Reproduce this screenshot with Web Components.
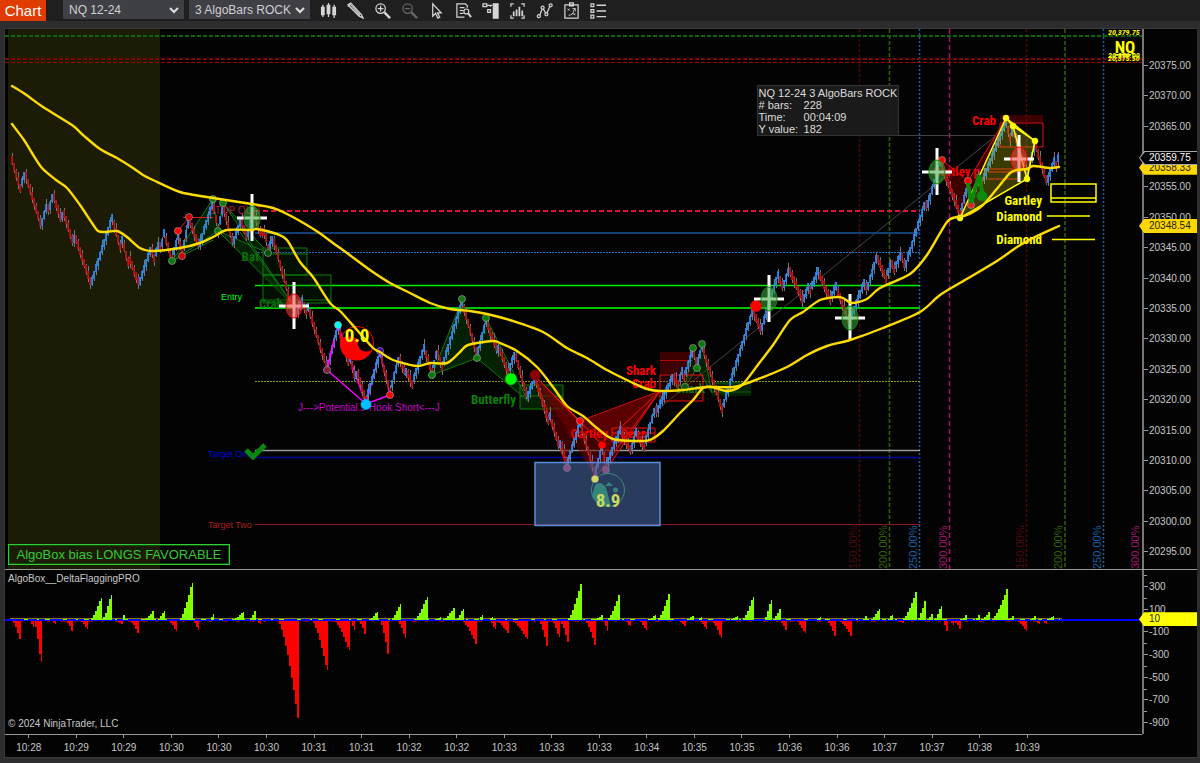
<!DOCTYPE html>
<html lang="en">
<head>
<meta charset="utf-8">
<title>Chart - NQ 12-24</title>
<style>
  html, body { margin: 0; height: 100%; background: #2d2d30; }
  body { font-family: "Liberation Sans", Arial, sans-serif; font-size: 10px; color: #c8c8c8; }
</style>
</head>
<body>
<chart-window>
  <tool-bar slot="bar"></tool-bar>
  <price-panel slot="price"></price-panel>
  <value-axis slot="price-axis" values="20375.00,20370.00,20365.00,20360.00,20355.00,20350.00,20345.00,20340.00,20335.00,20330.00,20325.00,20320.00,20315.00,20310.00,20305.00,20300.00,20295.00" style="--top:21px;--bottom:2px">
    <price-tag style="--y:25.7%;--bg:#ffd700">20358.33</price-tag>
    <price-tag style="--y:23.9%;--bg:#000;--fg:#fff;--edge:#aaa">20359.75</price-tag>
    <price-tag style="--y:36.5%;--bg:#ffd700">20348.54</price-tag>
  </value-axis>
  <delta-panel slot="delta"></delta-panel>
  <value-axis slot="delta-axis" minor values="300,100,-100,-300,-500,-700,-900" style="--top:5px;--bottom:0px">
    <price-tag style="--y:30%;--bg:#ff0">10</price-tag>
  </value-axis>
  <time-axis slot="time" values="10:28,10:29,10:29,10:30,10:30,10:30,10:31,10:31,10:32,10:32,10:33,10:33,10:33,10:34,10:35,10:35,10:36,10:36,10:37,10:37,10:38,10:39"></time-axis>
</chart-window>

<script>
const attach = (el, html) => { el.attachShadow({ mode: "open" }).innerHTML = html; };

/* ---------- window frame ---------- */
customElements.define("chart-window", class extends HTMLElement {
  constructor() {
    super();
    attach(this, `<style>
      :host { display: flex; flex-direction: column; height: 100vh; background: #2d2d30; }
      main { flex: 1; min-height: 0; margin: 7px 3px 5px 4px; border: 1px solid #3a3a3d; border-width: 1px 0 1px 1px; background: #030303;
        display: grid; grid-template-columns: minmax(0, 1fr) 55px; grid-template-rows: minmax(0, 540fr) minmax(0, 165fr) 23px; }
      div { display: grid; min-width: 0; min-height: 0; }
      .lower { border-top: 1px solid #999; }
      .time { border-top: 1px solid #999; }
    </style>
    <slot name="bar"></slot>
    <main>
      <div><slot name="price"></slot></div><div><slot name="price-axis"></slot></div>
      <div class="lower"><slot name="delta"></slot></div><div class="lower"><slot name="delta-axis"></slot></div>
      <div class="time"><slot name="time"></slot></div>
    </main>`);
  }
});

/* ---------- toolbar ---------- */
const ICONS = {
  "Chart style": `<path fill="currentColor" stroke="none" d="M1 5h4v9H1zM7 3h4v10H7zM13 5h4v9h-4z"/><path d="M3 3v13M9 1v15M15 3v14"/>`,
  "Drawing tools": `<path d="M1 3l3-2 11 12 2 4-4-2z"/><path d="M4 3l10 11M3 5l10 10M1 5l3-3" stroke-width="1.200"/>`,
  "Zoom in": `<circle cx="7" cy="7" r="5"/><path d="M7 4v6M4 7h6"/><path d="M11 11l6 6" stroke-width="2.6"/>`,
  "Zoom out": `<g stroke="#666"><circle cx="7" cy="7" r="5"/><path d="M4 7h6"/><path d="M11 11l6 6" stroke-width="2.6"/></g>`,
  "Cursor": `<path d="M5 2v13l3-3 2.4 5 2-1-2.400-4.500H14z"/>`,
  "Data series": `<path d="M13 6V4l-2-2H2v14h8M5 6h5M5 9h4M5 12h4"/><circle cx="12" cy="10" r="2.600"/><path d="M14 12l3 4" stroke-width="2"/>`,
  "Chart trader": `<path fill="currentColor" d="M12 2h5v15h-5z"/><path d="M1 2h4v3H1zM5 3.500h6M6 8h3v3H6zM9 5V3.500"/>`,
  "Chart properties": `<path d="M2 5V2h3M13 2h3v3M16 14v3h-3M5 17H2v-3"/><path d="M5 15v-5M8 15V8M11 15V5M14 15V9" stroke-width="1.800"/>`,
  "Indicators": `<path d="M4 14L7 6l4 7 4-9"/><g fill="#1f1f20"><circle cx="3" cy="15" r="1.600"/><circle cx="7" cy="6" r="1.600"/><circle cx="11" cy="13" r="1.600"/><circle cx="15.500" cy="3.500" r="1.600"/></g>`,
  "Strategies": `<path d="M2 3h14v14H2zM7 1h4v3H7z"/><path d="M6 14c3 0 5-2 5-4s1-2 2-3m0 3V7h-3M5 7l2 2m0-2L5 9M11 12l2 2m0-2l-2 2" stroke-width="1"/>`,
  "Properties": `<path d="M1 2h3v3H1zM1 8h3v3H1zM1 14h3v3H1z"/><path d="M7 3.500h10M7 9.500h10M7 15.500h10" stroke-width="1.500"/>`
};
customElements.define("tool-button", class extends HTMLElement {
  connectedCallback() {
    const name = this.getAttribute("name");
    attach(this, `<style>
      :host { display: block; }
      button { display: grid; place-items: center; width: 27px; height: 20px; margin: 0; padding: 0; border: 0; background: none; color: #d6d6d6; }
      svg { width: 17px; height: 17px; fill: none; stroke: currentColor; stroke-width: 1.3; }
    </style><button type="button" aria-label="${name}"><svg viewBox="0 0 18 18" aria-hidden="true">${ICONS[name]}</svg></button>`);
  }
});
customElements.define("tool-bar", class extends HTMLElement {
  constructor() {
    super();
    attach(this, `<style>
      :host { display: flex; align-items: flex-start; height: 21px; background: #1f1f20; }
      a { width: 46px; height: 21px; line-height: 21px; font-size: 15px; text-align: center; color: #fff; background: #e03c00; text-decoration: none; margin-right: 17px; }
      label { position: relative; display: block; margin-right: 5px; }
      select { appearance: none; width: 121px; height: 19px; padding: 0 16px 0 6px; border: 0; border-radius: 0; background: #3f3f46; color: #d0d0d0; font: 12px "Liberation Sans", Arial, sans-serif; }
      label svg { position: absolute; right: 5px; top: 6px; width: 10px; height: 8px; fill: none; stroke: #ddd; stroke-width: 2; pointer-events: none; }
    </style>
    <a href="#chart">Chart</a>
    <label><select aria-label="Instrument"><option>NQ 12-24</option></select><svg viewBox="0 0 10 8"><path d="M1 2l4 4 4-4"/></svg></label>
    <label><select aria-label="Interval"><option>3 AlgoBars ROCK</option></select><svg viewBox="0 0 10 8"><path d="M1 2l4 4 4-4"/></svg></label>
    ${Object.keys(ICONS).map(n => `<tool-button name="${n}"></tool-button>`).join("")}`);
  }
});

/* ---------- axes ---------- */
customElements.define("value-axis", class extends HTMLElement {
  connectedCallback() {
    const rows = this.getAttribute("values").split(",").map(v => `<li>${v}</li>`).join("");
    attach(this, `<style>
      :host { display: block; position: relative; min-height: 0; border-left: 2px solid #777; }
      ul { box-sizing: border-box; height: 100%; margin: 0; padding: var(--top) 0 var(--bottom); list-style: none; display: flex; flex-direction: column; }
      li { position: relative; flex: 1; min-height: 0; display: flex; align-items: center; gap: 1px; }
      li::before { content: ""; width: 4px; height: 1px; background: #999; }
      :host([minor]) li::after { content: ""; position: absolute; left: 0; top: 0; width: 3px; height: 1px; background: #999; }
    </style><ul>${rows}</ul><slot></slot>`);
  }
});
customElements.define("price-tag", class extends HTMLElement {
  constructor() {
    super();
    attach(this, `<style>
      :host { position: absolute; left: -5px; right: 0; top: var(--y); height: 14px; margin-top: -7px; display: block;
        background: var(--edge, var(--bg)); clip-path: polygon(0 50%, 5px 0, 100% 0, 100% 100%, 5px 100%); }
      span { position: absolute; inset: 1px 0 1px 1px; padding-left: 9px; line-height: 12px; color: var(--fg, #222); background: var(--bg); clip-path: polygon(0 50%, 5px 0, 100% 0, 100% 100%, 5px 100%); }
    </style><span><slot></slot></span>`);
  }
});
customElements.define("time-axis", class extends HTMLElement {
  connectedCallback() {
    attach(this, `<style>
      :host { display: block; }
      ol { display: grid; grid-auto-flow: column; grid-auto-columns: 1fr; margin: 0 91px 0 0; padding: 0; list-style: none; text-align: center; }
      li::before { content: ""; display: block; width: 1px; height: 3px; margin: 0 auto 4px; background: #999; }
      li { line-height: 12px; }
    </style><ol>${this.getAttribute("values").split(",").map(v => `<li>${v}</li>`).join("")}</ol>`);
  }
});

/* ---------- price data: turning points of the swings ---------- */
const SWINGS = [12,160,20,188,25,173,41,225,47,205,49,210,53,194,61,220,63,211,73,242,75,236,91,284,112,218,120,246,122,240,128,262,129,257,139,284,151,248,154,258,159,243,161,248,164,233,172,259,178,236,182,254,189,219,199,246,213,202,218,230,223,206,233,243,241,220,247,238,253,210,260,232,265,232,268,249,273,238,290,300,297,312,302,301,306,311,308,307,327,368,338,327,348,361,350,358,355,378,357,372,366,400,380,353,390,392,399,357,405,373,407,371,412,384,424,348,432,372,437,351,442,367,462,302,477,355,486,321,497,350,499,348,508,372,515,353,527,397,535,378,548,420,550,416,559,446,561,442,567,464,580,423,595,474,602,447,606,466,620,430,631,451,636,432,644,447,655,408,657,411,673,376,678,384,682,371,684,377,693,350,697,365,702,346,722,409,753,310,761,330,778,275,783,287,789,269,803,301,808,287,810,290,818,271,830,299,836,286,849,323,864,283,867,289,877,256,886,279,891,262,894,269,901,254,905,267,925,203,927,207,940,162,960,214,968,184,971,202,979,175,982,182,1006,122,1010,138,1013,129,1027,175,1035,144,1047,182,1054,161,1056,165,1059,155];
const SLOW = "12,86 25,94 43,107 72,125 83,135 100,149 117,158 133,168 143,175 153,180 180,192 207,197 252,204 273,208 285,213 300,221 318,232 333,243 347,253 370,270 390,283 410,293 430,303 450,309 470,311 487,314 513,321 543,332 567,348 587,358 607,370 633,383 647,389 660,391 683,390 707,387 733,387 753,381 787,367 807,355 827,346 850,340 883,328 920,312 940,295 965,280 997,261 1017,247 1033,238 1059,226";
const FAST = "12,124 24,140 32,153 42,168 56,180 67,188 80,205 92,223 98,231 105,232 117,231 127,237 140,248 153,251 180,248 200,243 213,237 227,230 252,230 257,229 277,234 287,240 300,262 313,277 330,303 340,311 357,330 373,348 380,352 393,360 417,366 430,363 447,363 460,352 468,345 492,341 500,343 517,351 537,367 553,387 567,406 583,416 597,428 613,439 643,441 652,439 663,431 680,413 693,400 703,388 712,387 727,391 742,385 760,362 773,345 790,320 803,312 820,300 837,297 843,298 852,303 867,299 880,288 910,274 927,255 947,222 957,217 967,215 983,205 1000,185 1010,173 1017,170 1027,169 1033,166 1050,168 1059,167";

/* Catmull-Rom spline through a list of points */
function smooth(list) {
  const p = list.split(" ").map(s => s.split(",").map(Number));
  let d = `M${p[0]}`;
  for (let i = 0; i < p.length - 1; i++) {
    const a = p[Math.max(0, i - 1)], b = p[i], c = p[i + 1], e = p[Math.min(p.length - 1, i + 2)];
    d += `C${b[0] + (c[0] - a[0]) / 7} ${b[1] + (c[1] - a[1]) / 7} ${c[0] - (e[0] - b[0]) / 7} ${c[1] - (e[1] - b[1]) / 7} ${c}`;
  }
  return d;
}
function bars() {
  let wicks = "", up = "", down = "", n = 0, k = 0;
  for (let x = 12; x <= 1059; x += 2, n++) {
    while (k < SWINGS.length - 4 && SWINGS[k + 2] < x) k += 2;
    const [a, b, c, d] = SWINGS.slice(k, k + 4);
    const y = Math.round(b + (d - b) * (x - a) / (c - a)), tail = [3, 0, 1, 5, 0, 2, 0][n % 7];
    wicks += `M${x + .5} ${y - 4 - tail}v${9 + tail + n * 5 % 4}`;
    const body = `M${x} ${y - 4}v8`;
    if (d < b) up += body; else down += body;
  }
  return `<path stroke="#777" d="${wicks}"/><path stroke="#1e90ff" stroke-width="1.700" d="${up}"/><path stroke="#c00a0a" stroke-width="1.700" d="${down}"/>`;
}
const dot = (x, y, c, r = 3.5, ring = "#aaa") => `<circle cx="${x}" cy="${y}" r="${r}" fill="${c}" stroke="${ring}" stroke-opacity=".6"/>`;
const cross = (x, y, c, edge) => `<path d="M${x - 15} ${y}h30M${x} ${y - 24}v47" stroke="#fff" stroke-width="3"/><ellipse cx="${x}" cy="${y}" rx="8" ry="12" fill="${c}" fill-opacity=".55" stroke="${edge}"/>`;
const hline = (y, c, w = 1, dash = "", x1 = 255, x2 = 920) => `<path d="M${x1} ${y}H${x2}" stroke="${c}" stroke-width="${w}" ${dash && `stroke-dasharray="${dash}"`}/>`;
const vline = (x, c, dash, label, lx = x - 3) => (dash ? `<path d="M${x} 29V569" stroke="${c}" stroke-width="1.500" stroke-dasharray="${dash}"/>` : "") +
  `<text transform="translate(${lx} 569) rotate(-90)" fill="${c}" font-size="11">${label}</text>`;
const name = (x, y, c, t, s = 13) => `<text class="n" x="${x}" y="${y}" fill="${c}" font-size="${s}" text-anchor="end">${t}</text>`;

customElements.define("price-panel", class extends HTMLElement {
  constructor() {
    super();
    attach(this, `<style>
      :host { display: block; position: relative; min-height: 0; overflow: hidden; }
      svg { display: block; width: 100%; height: 100%; fill: none; }
      text { stroke: none; }
      .n { font-family: "Liberation Sans Narrow", "Roboto Condensed", "Open Sans Condensed", "DejaVu Sans Condensed", sans-serif; font-weight: 700; }
      .i { font-style: italic; }
      dl { position: absolute; left: 66.1%; top: 10.4%; box-sizing: border-box; margin: 0; padding: 1px; height: 51px; display: grid; grid-template-columns: 45px auto; font-size: 11px; line-height: 12px; color: #ddd; background: #1c1c1cee; border: 1px solid #333; white-space: nowrap; }
      dt, dd { margin: 0; }
      .t { grid-column: 1 / 3; }
      .bias { position: absolute; left: 3px; bottom: 4px; box-sizing: border-box; width: 222px; height: 21px; line-height: 19px; text-align: center; border: 1px solid #32cd32; outline: 1px solid #0a4a0a; outline-offset: -2px; font-size: 13px; color: #32cd32; white-space: nowrap; }
    </style>
    <svg viewBox="5 29 1137 540" role="img" aria-label="NQ 12-24 price chart">
      <rect x="8" y="29" width="152" height="540" fill="#1c1b05"/>
      ${vline(859.5, "#4a0a0a", "3 2", "150.00%")}${vline(889.5, "#336408", "4 2", "200.00%")}${vline(919.5, "#1560a8", "2 2", "250.00%")}${vline(949.5, "#a0146a", "5 3", "300.00%")}
      ${vline(1026.5, "#4a0a0a", "3 2", "150.00%")}${vline(1065, "#336408", "4 2", "200.00%")}${vline(1103.500, "#1560a8", "2 2", "250.00%")}${vline(1142, "#a0146a", "", "300.00%")}
      ${hline(36, "#0b660b", 2, "4 2", 5, 1142)}${hline(59, "#7d0505", 2, "4 2", 5, 1142)}${hline(62.5, "#a00808", 1, "4 2", 5, 1142)}
      ${hline(211, "#dc143c", 2, "5 3")}${hline(233, "#123f72", 2)}${hline(252.5, "#1e70c8", 1, "2 1")}
      ${hline(285.5, "#00f000", 1.5)}${hline(308, "#00c800", 2)}${hline(381.5, "#8a9a1a", 1, "2 1")}
      ${hline(450.5, "#999", 1.5)}${hline(457.5, "#0000a0", 1.5)}${hline(524.5, "#8b1a1a", 1)}
      <text x="221" y="300" fill="#0f0" font-size="9">Entry</text>
      <text x="208" y="457" fill="#00d" font-size="9">Target One</text>
      <text x="208" y="528" fill="#a22" font-size="9">Target Two</text>
      <text x="298" y="411" fill="#c800c8" font-size="10">J---&gt;Potential J-Hook Short&lt;---J</text>
      <path d="M657 410L996 135.500H895" stroke="#444"/>

      <g fill="#064006" fill-opacity=".5" stroke="#0c7c0c">
        <path d="M172 261L213 199L218 231ZM218 231L223 203L268 253ZM218 231L294 306L223 203M240 232L294 306M172 261L213 240"/>
        <path d="M263 248h44v27h-44zM263 275h68v28h-68zM263 300h68M263 254h44" fill-opacity=".2"/>
        <path d="M432 375L462 300L477 358ZM477 358L486 318L528 401ZM520 385h43v24h-43zM520 396h43"/>
        <path d="M685 387L693 348L697 368L702 343L712 393L697 368ZM712 383h39M712 392h39"/>
        <path d="M712 383h39v13h-39z" stroke="none"/>
      </g>
      <g fill="#700" fill-opacity=".5" stroke="#f01010">
        <path d="M178 231L182 256L189 217Z" fill="none"/><path d="M183 217.500h30"/>
        <path d="M535 376L567 468L580 421ZM580 421L660 391L606 470L602 445Z"/>
        <path d="M660 391L595 478L580 421M620 428L660 391M535 376L602 445L595 478"/>
        <path d="M612 428h43v14h-43zM612 433h43M660 375h43v26h-43zM660 360.500h32" fill-opacity=".25"/>
        <path d="M660 352h30v23h-30zM1000 115h43v7h-43z" stroke="none"/>
        <path d="M942 160L960 217L968 181ZM960 217L968 181L1006 118Z"/>
        <path d="M1000 123h43v24h-43zM988 169h33M988 172h33M988 179h33" fill="none"/>
      </g>
      <text x="208" y="214" fill="#b01c40" font-size="10">STOP QUIT</text>
      <g>
        ${name(259, 261, "#0a700a", "Bat")}${name(283, 308, "#0a700a", "Crab")}${name(516, 404, "#0a800a", "Butterfly")}
        ${name(656, 375, "#f00", "Shark")}${name(656, 388, "#f00", "Crab")}${name(608, 438, "#e00", "Gartley")}${name(647, 438, "#e00", "Deep")}${name(705, 393, "#0a700a", "Shark")}
        ${name(980, 176, "#e00", "Gartley p")}${name(996, 125, "#f00", "Crab")}
      </g>
      <path d="M327 370L338 325L366 404L380 352L390 395" stroke="#f0f" stroke-width="1.500"/>
      ${bars()}
      <path d="M327 370L366 404L390 395M327 370L334 340" stroke="#f0f" stroke-width="1.500"/>
      <path d="M960 218L1006 118L1013 126L1027 179ZM1006 118L1035 141L1027 179M1013 126L1035 141M960 218L1006 118" fill="#c8c800" fill-opacity=".28" stroke="#ff0" stroke-width="1.500"/>
      <path d="M1051 184h45v18h-45zM1051 198h45M1047 216h43M1052 239.500h43" stroke="#ff0" stroke-width="1.500"/>
      ${name(1042, 205, "#ff0", "Gartley")}${name(1042, 221, "#ff0", "Diamond")}${name(1042, 244, "#ff0", "Diamond")}
      ${dot(172, 261, "#0a7a0a")}${dot(213, 199, "#0a7a0a")}${dot(218, 231, "#0a7a0a")}${dot(223, 203, "#0a7a0a")}${dot(268, 253, "#075007")}
      ${dot(178, 231, "#f00")}${dot(182, 256, "#c00")}${dot(189, 217, "#c00")}
      ${dot(338, 325, "#0ff")}${dot(327, 370, "#802040")}${dot(390, 395, "#f00")}${dot(380, 351, "#30a")}${dot(366, 404.500, "#00bfff", 5, "#00bfff")}
      ${dot(432, 375, "#0a7a0a")}${dot(462, 299, "#0a7a0a")}${dot(477, 358, "#0a7a0a")}${dot(486, 318, "#0a7a0a")}${dot(511, 379, "#0f0", 5.500, "#0f0")}
      ${dot(535, 375, "#8b0000", 5, "#8b0000")}${dot(580, 421, "#f00")}${dot(567, 468, "#e03060")}${dot(602, 445, "#f00", 3.500, "#f00")}${dot(606, 470, "#e03060")}
      ${dot(693, 348, "#0a7a0a")}${dot(702, 344, "#0a7a0a")}${dot(697, 368, "#0a7a0a")}${dot(685, 387, "#0a5a0a")}
      ${dot(756, 306, "#f00", 5.500, "#f00")}${dot(942, 160, "#f00")}${dot(968, 181, "#f00")}${dot(971, 205, "#d22")}
      ${dot(960, 218, "#ff0", 3, "#ff0")}${dot(1006, 118, "#ff0", 3, "#ff0")}${dot(1013, 126, "#ff0", 3, "#ff0")}${dot(1035, 141, "#ff0", 3, "#ff0")}${dot(1027, 179, "#ff0", 3, "#ff0")}
      <path d="M968 183L971 203L979 175L983 196" stroke="#0a8a0a" stroke-width="4"/>${dot(982, 196, "#0a8a0a", 5, "#0a8a0a")}
      ${cross(252, 218, "#3caa3c", "#0a8a0a")}${cross(294, 306, "#ff4040", "#f00")}${cross(769, 299, "#3caa3c", "#0a8a0a")}${cross(850, 318, "#3caa3c", "#0a8a0a")}${cross(937, 172, "#3caa3c", "#0a8a0a")}${cross(1019, 159, "#ff4040", "#f00")}
      <circle cx="357" cy="343" r="16.500" stroke="#f00"/><path d="M341 338A16.500 16.500 0 0 0 372 350Q366 353 361 350Q356 345 359 340Q351 334 341 338Z" fill="#f00"/>
      <g stroke="#ffdc00" stroke-width="2.400" stroke-linecap="round"><path d="${smooth(SLOW)}"/><path d="${smooth(FAST)}"/></g>
      <text class="n" x="357" y="342" fill="#ff0" font-size="19" text-anchor="middle">0.0</text>
      <path d="M246 450L253 457L265 445" stroke="#0a8a0a" stroke-width="5"/>

      <circle cx="608" cy="490" r="16.500" stroke="#1fc050"/><path d="M592 496A16.500 16.500 0 0 0 611 506L606 488Q601 480 595 485Z" fill="#1fb050"/><path d="M605 486l4-4 4 4zM613 490a2.500 2.500 0 1 0 5 0a2.500 2.500 0 1 0-5 0" fill="#1fb050"/>
      <rect x="535" y="462.500" width="125" height="63" fill="#46659f" fill-opacity=".58" stroke="#5b8ae0" stroke-width="1.500"/>
      <text class="n" x="608" y="507" fill="#c8d860" font-size="19" text-anchor="middle">8.9</text>
      ${dot(595, 479, "#d8d860")}
      <text class="n" x="1125" y="53" fill="#ff0" font-size="17" text-anchor="middle" text-decoration="underline">NQ</text>
      <g fill="#ff0" font-size="8"><text class="n i" x="1108" y="35">20,379.75</text><text class="n i" x="1108" y="58">20,376.00</text><text class="n i" x="1108" y="61">20,375.50</text></g>
    </svg>
    <dl><dt class="t">NQ 12-24 3 AlgoBars ROCK</dt><dt># bars:</dt><dd>228</dd><dt>Time:</dt><dd>00:04:09</dd><dt>Y value:</dt><dd>182</dd></dl>
    <div class="bias">AlgoBox bias LONGS FAVORABLE</div>`);
  }
});

/* ---------- delta histogram: start x, end x, extreme y of each run ---------- */
const GREEN = [[91,102,598],[103,112,595],[123,125,615],[144,154,611],[158,165,611],[180,193,583],[211,214,614],[233,244,612],[250,256,611],[369,378,612],[392,401,604],[415,428,597],[438,441,617],[443,455,608],[457,464,609],[480,483,615],[490,493,617],[568,582,584],[595,603,615],[608,620,595],[649,656,615],[658,670,594],[686,694,616],[699,702,617],[731,738,616],[743,754,597],[765,772,600],[773,781,609],[818,821,617],[863,867,616],[871,880,609],[888,893,615],[903,917,592],[918,926,601],[927,933,614],[935,942,606],[963,967,615],[976,980,615],[982,990,612],[992,1008,589],[1008,1014,616],[1030,1036,616],[1047,1054,616]];
const RED = [[13,21,639],[31,34,627],[35,42,662],[53,56,624],[67,73,631],[81,88,629],[117,123,624],[131,139,633],[170,177,631],[194,199,630],[258,261,624],[279,299,718],[313,328,670],[335,350,650],[352,355,630],[360,366,634],[381,389,654],[399,406,638],[463,477,644],[491,496,629],[497,509,633],[513,528,639],[540,548,646],[553,560,637],[561,569,642],[586,596,645],[605,608,631],[626,631,626],[640,647,630],[680,686,626],[700,707,629],[713,722,638],[781,787,630],[797,806,633],[828,836,636],[840,852,636],[900,904,623],[944,948,631],[951,954,625],[955,961,629],[1018,1027,631],[1037,1040,624],[1044,1047,624]];
function runs(list, base) {
  return list.map(([a, b, y]) => {
    let d = `M${a} ${base}`;
    for (let x = a; x < b; x += 2) {
      const t = Math.min(1, (x + 2 - a) / (b - a));
      d += `V${Math.round(base + (y - base) * Math.pow(t, 1.5))}H${Math.min(x + 2, b)}`;
    }
    return d + `V${base}Z`;
  }).join("");
}
customElements.define("delta-panel", class extends HTMLElement {
  constructor() {
    super();
    attach(this, `<style>
      :host { display: block; position: relative; min-height: 0; overflow: hidden; }
      svg { display: block; width: 100%; height: 100%; shape-rendering: crispEdges; }
      h2, small { position: absolute; left: 3px; margin: 0; font: 10px/12px "Liberation Sans", Arial, sans-serif; }
      h2 { top: 3px; } small { bottom: 4px; }
    </style>
    <svg viewBox="5 570 1137 164" role="img" aria-label="Delta flagging histogram">
      <path d="M5 620H1142" stroke="#00f" stroke-width="2"/>
      <path d="M10 618.500H1062" stroke="#857a10"/>
      <path d="M24 619.500H1060" stroke="#7fff00" stroke-dasharray="4 9 2 6 5 13"/>
      <path d="M20 621.500H1040" stroke="#900" stroke-dasharray="3 11 5 8"/>
      <path d="${runs(GREEN, 620)}" fill="#7fff00"/><path d="${runs(RED, 621)}" fill="#f00"/>
    </svg>
    <h2>AlgoBox__DeltaFlaggingPRO</h2><small>© 2024 NinjaTrader, LLC</small>`);
  }
});
</script>
</body>
</html>
